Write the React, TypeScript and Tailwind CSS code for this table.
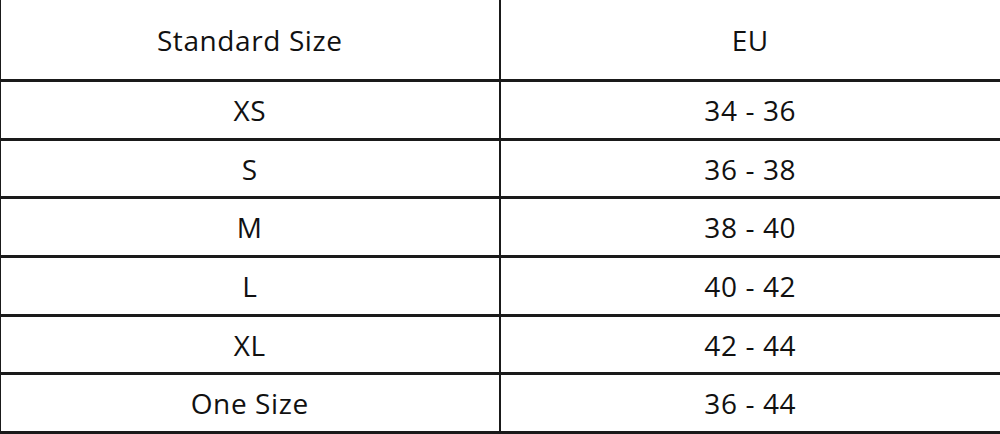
const rows = [
  { size: "XS", eu: "34 - 36" },
  { size: "S", eu: "36 - 38" },
  { size: "M", eu: "38 - 40" },
  { size: "L", eu: "40 - 42" },
  { size: "XL", eu: "42 - 44" },
  { size: "One Size", eu: "36 - 44" },
];

export default function App() {
  return (
    <div className="w-[1000px] h-[434px] bg-white text-[#111] font-['Open_Sans',sans-serif] text-[28px] tracking-[0.6px]">
      <div className="border-l border-[#1a1a1a] h-full flex flex-col">
        <div className="grid grid-cols-2 h-[82px] border-b-[3px] border-[#1a1a1a]">
          <div className="flex items-center justify-center border-r-2 border-[#1a1a1a]">
            Standard Size
          </div>
          <div className="flex items-center justify-center">EU</div>
        </div>
        {rows.map((r) => (
          <div key={r.size} className="grid grid-cols-2 flex-1 border-b-[3px] border-[#1a1a1a]">
            <div className="flex items-center justify-center border-r-2 border-[#1a1a1a]">{r.size}</div>
            <div className="flex items-center justify-center">{r.eu}</div>
          </div>
        ))}
      </div>
    </div>
  );
}
